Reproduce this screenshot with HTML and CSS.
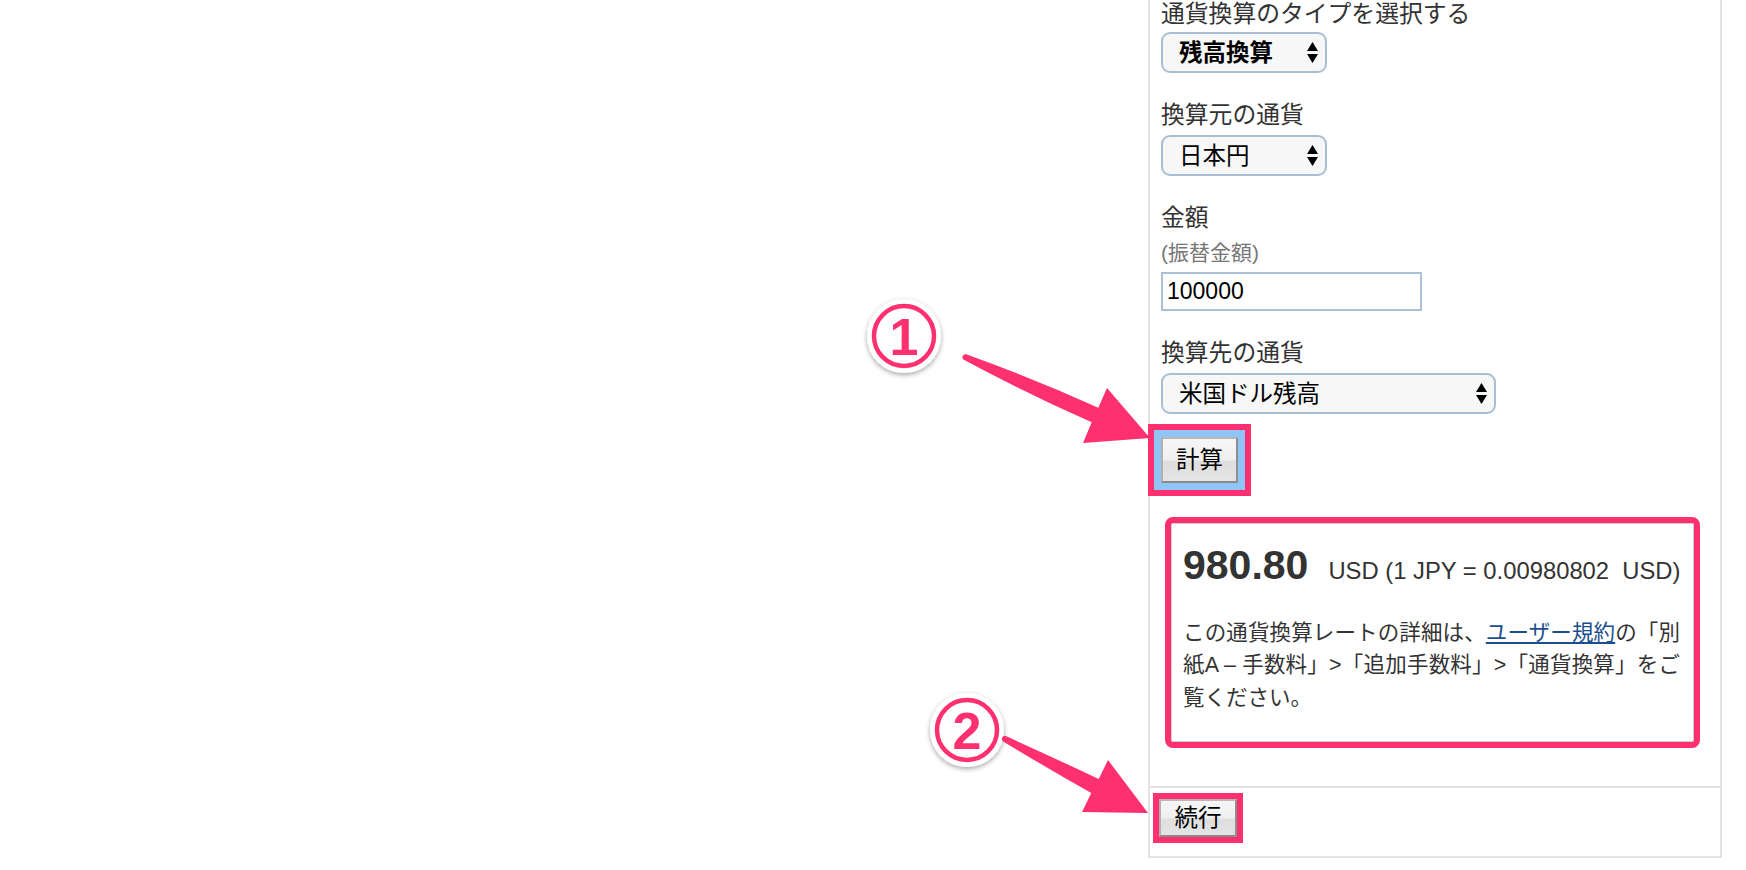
FILE: index.html
```html
<!DOCTYPE html>
<html lang="ja">
<head>
<meta charset="utf-8">
<title>通貨換算</title>
<link rel="stylesheet" href="styles.css">
</head>
<body>
<div class="page">
  <section class="panel">
    <div class="form">
      <div class="field">
        <div class="label">通貨換算のタイプを選択する</div>
        <div class="select select-sm"><span class="select-value strong">残高換算</span><svg class="arrows" viewBox="0 0 11 21"><path d="M5.5 0 L11 9 L0 9 Z"/><path d="M0 12 L11 12 L5.5 21 Z"/></svg></div>
      </div>
      <div class="field">
        <div class="label">換算元の通貨</div>
        <div class="select select-sm"><span class="select-value">日本円</span><svg class="arrows" viewBox="0 0 11 21"><path d="M5.5 0 L11 9 L0 9 Z"/><path d="M0 12 L11 12 L5.5 21 Z"/></svg></div>
      </div>
      <div class="field">
        <div class="label">金額</div>
        <div class="hint">(振替金額)</div>
        <input class="amount-input" type="text" value="100000">
      </div>
      <div class="field">
        <div class="label">換算先の通貨</div>
        <div class="select select-lg"><span class="select-value">米国ドル残高</span><svg class="arrows" viewBox="0 0 11 21"><path d="M5.5 0 L11 9 L0 9 Z"/><path d="M0 12 L11 12 L5.5 21 Z"/></svg></div>
      </div>
      <button class="btn btn-calc" type="button">計算</button>
      <div class="result">
        <div class="result-line"><span class="result-amount">980.80</span><span class="result-rate">USD (1 JPY = 0.00980802&nbsp; USD)</span></div>
        <p class="result-note">この通貨換算レートの詳細は、<a href="#">ユーザー規約</a>の「別紙A – 手数料」&gt;「追加手数料」&gt;「通貨換算」をご覧ください。</p>
      </div>
    </div>
    <div class="actions">
      <button class="btn btn-continue" type="button">続行</button>
    </div>
  </section>

  <svg class="annotations" width="1746" height="870" viewBox="0 0 1746 870">
    <defs>
      <filter id="shadow" x="-40%" y="-40%" width="180%" height="180%">
        <feDropShadow dx="0" dy="2" stdDeviation="2.5" flood-color="#000" flood-opacity="0.35"/>
      </filter>
    </defs>
    <g>
      <circle cx="904" cy="336" r="37" fill="#fff" filter="url(#shadow)"/>
      <circle cx="904" cy="336" r="30" fill="none" stroke="#ff3070" stroke-width="4.5"/>
      <text x="904" y="355" text-anchor="middle" class="badge-num">1</text>
    </g>
    <path class="arrow" d="M966.2 354.3 Q1032 378 1098.3 407.7 L1107 388 L1150 438 L1083 443 L1091.7 422.3 Q1028 394 963.8 359.7 A3 3 0 0 1 966.2 354.3 Z"/>
    <g>
      <circle cx="967" cy="730" r="37" fill="#fff" filter="url(#shadow)"/>
      <circle cx="967" cy="730" r="30" fill="none" stroke="#ff3070" stroke-width="4.5"/>
      <text x="967" y="749" text-anchor="middle" class="badge-num">2</text>
    </g>
    <path class="arrow" d="M1006.4 736.3 Q1052 757 1098.7 778.9 L1108 760 L1148 813 L1082 812 L1091.3 793.1 Q1047 768 1003.6 741.7 A3 3 0 0 1 1006.4 736.3 Z"/>
  </svg>
</div>
</body>
</html>
```

FILE: styles.css
```css
* {
  box-sizing: border-box;
}

html, body {
  margin: 0;
  padding: 0;
  background: #fff;
}

body {
  font-family: "Liberation Sans", "Noto Sans CJK JP", sans-serif;
  color: #333;
}

.page {
  position: relative;
  width: 1746px;
  height: 870px;
  overflow: hidden;
  display: flex;
  justify-content: flex-end;
  padding-right: 24px;
}

.panel {
  width: 574px;
  height: 858px;
  border: 2px solid #e2e2e2;
  border-top: 0;
  display: flex;
  flex-direction: column;
}

.form {
  height: 786px;
  padding-left: 11px;
  display: flex;
  flex-direction: column;
  align-items: flex-start;
}

.field {
  display: flex;
  flex-direction: column;
  align-items: flex-start;
}

.field:first-child {
  margin-top: 1px;
}

.field:first-child .label {
  margin-bottom: 5px;
}

.field + .field {
  margin-top: 29px;
}

.label {
  font-size: 23.8px;
  line-height: 26px;
  color: #333;
  margin-bottom: 7px;
  white-space: nowrap;
}

.hint {
  font-size: 21px;
  line-height: 24px;
  color: #777;
  margin-top: 3px;
  margin-bottom: 7px;
}

.select {
  height: 41px;
  border: 2px solid #a9bdd5;
  border-radius: 9px;
  background: #f7f7f7;
  display: flex;
  align-items: center;
  justify-content: space-between;
  padding: 0 7px 0 16px;
  font-size: 23.5px;
  line-height: 26px;
  color: #000;
}

.select-value.strong {
  font-weight: bold;
}

.select-sm {
  width: 166px;
}

.select-lg {
  width: 335px;
}

.arrows {
  width: 11px;
  height: 21px;
  fill: #000;
  flex: none;
}

.amount-input {
  width: 261px;
  height: 39px;
  border: 2px solid #acc0d7;
  border-radius: 0;
  padding: 0 0 0 4px;
  margin: 0;
  font-family: "Liberation Sans", sans-serif;
  font-size: 23px;
  color: #000;
  background: #fff;
  outline: none;
}

.btn {
  font-family: "Liberation Sans", "Noto Sans CJK JP", sans-serif;
  font-size: 23.5px;
  line-height: 26px;
  color: #000;
  padding: 0;
  margin: 0;
  border: 2px solid #a0a0a0;
  border-color: #b8b8b8 #8f8f8f #8a8a8a #b0b0b0;
  border-radius: 0;
  background: linear-gradient(#f6f6f6 0%, #efefef 50%, #dedede 53%, #e4e4e4 100%);
}

.btn-calc {
  width: 77px;
  height: 46px;
  margin-top: 23px;
  box-shadow: 0 0 0 7px #8ec4f6, 0 0 0 13px #ff3070;
}

.result {
  margin-top: 40px;
  margin-left: 10px;
  width: 523px;
  border: 1px solid #cfcfcf;
  border-radius: 2px;
  outline: 6px solid #ff3070;
  outline-offset: 0;
  padding: 19.5px 13px 27px 11px;
}

.result-line {
  display: flex;
  align-items: baseline;
  gap: 20px;
  color: #333;
  white-space: nowrap;
}

.result-amount {
  font-size: 41px;
  line-height: 42px;
  font-weight: bold;
}

.result-rate {
  font-size: 23.8px;
  line-height: 42px;
}

.result-note {
  margin: 25px 0 0;
  font-size: 21.5px;
  line-height: 32.5px;
  text-align: justify;
  color: #333;
}

.result-note a {
  color: #1c4e8d;
  text-decoration: underline;
}

.actions {
  flex: 1;
  border-top: 2px solid #e2e2e2;
  padding: 11px 0 0 9px;
}

.btn-continue {
  width: 78px;
  height: 38px;
  box-shadow: 0 0 0 6px #ff3070;
}

.annotations {
  position: absolute;
  left: 0;
  top: 0;
  pointer-events: none;
}

.arrow {
  fill: #ff3070;
}

.badge-num {
  font-family: "Liberation Sans", sans-serif;
  font-weight: bold;
  font-size: 52px;
  fill: #ff3070;
}
```
